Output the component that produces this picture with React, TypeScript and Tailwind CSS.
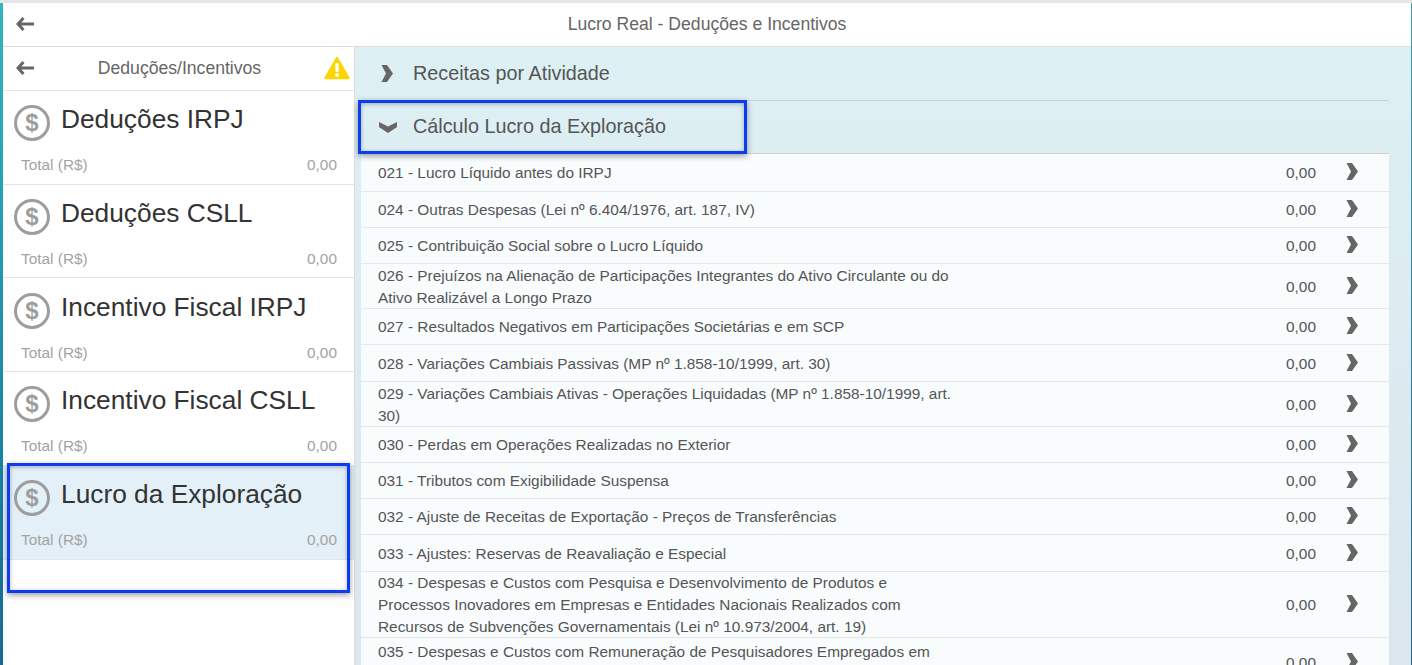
const font = { fontFamily: '"Liberation Sans", Arial, sans-serif' };

const cards = ["Deduções IRPJ", "Deduções CSLL", "Incentivo Fiscal IRPJ", "Incentivo Fiscal CSLL", "Lucro da Exploração"];

const rows: { lines: string[]; h: string }[] = [
  { lines: ["021 - Lucro Líquido antes do IRPJ"], h: "h-[38px]" },
  { lines: ["024 - Outras Despesas (Lei nº 6.404/1976, art. 187, IV)"], h: "h-[36px]" },
  { lines: ["025 - Contribuição Social sobre o Lucro Líquido"], h: "h-[36px]" },
  { lines: ["026 - Prejuízos na Alienação de Participações Integrantes do Ativo Circulante ou do", "Ativo Realizável a Longo Prazo"], h: "h-[45px]" },
  { lines: ["027 - Resultados Negativos em Participações Societárias e em SCP"], h: "h-[36px]" },
  { lines: ["028 - Variações Cambiais Passivas (MP nº 1.858-10/1999, art. 30)"], h: "h-[37px]" },
  { lines: ["029 - Variações Cambiais Ativas - Operações Liquidadas (MP nº 1.858-10/1999, art.", "30)"], h: "h-[45px]" },
  { lines: ["030 - Perdas em Operações Realizadas no Exterior"], h: "h-[36px]" },
  { lines: ["031 - Tributos com Exigibilidade Suspensa"], h: "h-[36px]" },
  { lines: ["032 - Ajuste de Receitas de Exportação - Preços de Transferências"], h: "h-[36px]" },
  { lines: ["033 - Ajustes: Reservas de Reavaliação e Especial"], h: "h-[37px]" },
  { lines: ["034 - Despesas e Custos com Pesquisa e Desenvolvimento de Produtos e", "Processos Inovadores em Empresas e Entidades Nacionais Realizados com", "Recursos de Subvenções Governamentais (Lei nº 10.973/2004, art. 19)"], h: "h-[66px]" },
  { lines: ["035 - Despesas e Custos com Remuneração de Pesquisadores Empregados em", "Atividades de Pesquisa e Desenvolvimento"], h: "h-[50px]" },
];

function ArrowLeft() {
  return (
    <svg width="18" height="14" viewBox="0 0 18 14" className="shrink-0">
      <path d="M7.5 1 L2 7 L7.5 13 M2.5 7 H18" fill="none" stroke="#666" strokeWidth="3" />
    </svg>
  );
}

function ChevronRight({ w = 12, h = 17 }: { w?: number; h?: number }) {
  return (
    <svg width={w} height={h} viewBox="0 0 12 17" className="shrink-0">
      <path d="M0.5 0 H6 L12 8.5 L6 17 H0.5 L5 8.5 Z" fill="#666" />
    </svg>
  );
}

function ChevronDown() {
  return (
    <svg width="18" height="11" viewBox="0 0 18 11" className="shrink-0 mt-[1px]">
      <path d="M0 0 L9 4.5 L18 0 V5 L9 11 L0 5 Z" fill="#666" />
    </svg>
  );
}

function Dollar() {
  return (
    <div className="w-[36px] h-[36px] rounded-full border-[3px] border-[#9d9d9d] flex items-center justify-center shrink-0 text-[#9d9d9d] text-[24px] font-bold leading-none">
      $
    </div>
  );
}

function Card({ title, active }: { title: string; active: boolean }) {
  return (
    <div className={`${active ? "bg-[#e3f0f8] h-[94.2px]" : "bg-white h-[93.7px]"} border-b border-[#e4e4e4] px-[11px] flex flex-col`}>
      <div className="flex items-start mt-[14.4px]">
        <Dollar />
        <div className="ml-[11px] text-[26.3px] leading-[28px] text-[#333]">{title}</div>
      </div>
      <div className="flex justify-between mt-[14px] pl-[7px] pr-[6px] text-[15.4px] leading-[20px] text-[#a3a3a3]">
        <span>Total (R$)</span>
        <span>0,00</span>
      </div>
    </div>
  );
}

export default function App() {
  return (
    <div style={font} className="relative w-[1412px] h-[665px] overflow-hidden bg-white flex flex-col">
      <div className="h-[3px] bg-[#e6e6e6] shrink-0" />
      <div className="flex flex-1 min-h-0">
        <div className="w-[3px] shrink-0 bg-gradient-to-b from-[#2fb7bd] to-[#146a96]" />
        <div className="flex-1 min-w-0 flex flex-col">
          <div className="h-[44px] shrink-0 border-b border-[#dedede] relative flex items-center justify-center text-[17.6px] text-[#666]">
            <div className="absolute left-[13px] top-[14px]"><ArrowLeft /></div>
            <span>Lucro Real - Deduções e Incentivos</span>
          </div>
          <div className="flex flex-1 min-h-0">
            <div className="w-[352px] shrink-0 border-r border-[#dedede] bg-white flex flex-col">
              <div className="h-[44px] shrink-0 border-b border-[#e4e4e4] flex items-center relative justify-center text-[17.6px] text-[#666] pl-[2px]">
                <div className="absolute left-[13px] top-[14px]"><ArrowLeft /></div>
                <span>Deduções/Incentivos</span>
                <svg width="26" height="24" viewBox="0 0 26 24" className="absolute left-[321px] top-[9px]">
                  <path d="M13 2 L24.5 22 H1.5 Z" fill="#ffd500" stroke="#ffd500" strokeWidth="2.4" strokeLinejoin="round" />
                  <rect x="11.3" y="7" width="3.4" height="9" rx="1.2" fill="#fff" />
                  <circle cx="13" cy="19" r="1.9" fill="#fff" />
                </svg>
              </div>
              {cards.map((c, i) => <Card key={c} title={c} active={i === 4} />)}
            </div>
            <div className="flex-1 min-w-0 bg-gradient-to-b from-[#ddf0f3] to-[#dbe6ee] pl-[6px] pr-[22px]">
              <div className="h-[54px] border-b border-[#cfcfcf] flex items-center pl-[20px] text-[19.8px] text-[#555]">
                <ChevronRight w={12} h={17} />
                <span className="ml-[20px]">Receitas por Atividade</span>
              </div>
              <div className="h-[53px] border-b border-[#cfcfcf] flex items-center pl-[18px] text-[19.8px] text-[#555]">
                <ChevronDown />
                <span className="ml-[16px]">Cálculo Lucro da Exploração</span>
              </div>
              <div className="bg-[#f8fcfd]">
                {rows.map((r) => (
                  <div key={r.lines[0]} className={`${r.h} border-b border-[#e4e6e8] flex items-center pl-[17px] pt-[1px] text-[15.4px] leading-[22px] text-[#555]`}>
                    <div className="w-[890px] shrink-0">
                      {r.lines.map((l) => <div key={l} className="whitespace-nowrap">{l}</div>)}
                    </div>
                    <div className="w-[48px] text-right">0,00</div>
                    <div className="ml-[30px] -mt-[3px]"><ChevronRight /></div>
                  </div>
                ))}
              </div>
            </div>
          </div>
        </div>
        <div className="w-px shrink-0 bg-gradient-to-b from-[#2fa5ab] to-[#146a96]" />
      </div>
      <div className="absolute left-[7px] top-[463px] w-[343px] h-[130px] border-[3px] border-[#0b3cf0] shadow-[0_2px_6px_rgba(0,0,0,0.4),inset_0_1px_4px_rgba(0,0,0,0.3)]" />
      <div className="absolute left-[358px] top-[100px] w-[389px] h-[54px] border-[3px] border-[#0b3cf0] shadow-[0_2px_6px_rgba(0,0,0,0.4),inset_0_1px_4px_rgba(0,0,0,0.3)]" />
    </div>
  );
}
